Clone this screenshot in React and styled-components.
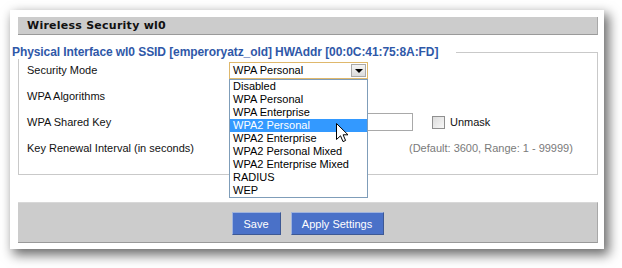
import React from "react";
import styled, { createGlobalStyle } from "styled-components";

const GlobalStyle = createGlobalStyle`
  html, body { margin: 0; padding: 0; background: #ffffff; }
  body { font-family: "Liberation Sans", Arial, sans-serif; font-size: 11px; color: #000; }
`;

const Page = styled.div`
  padding: 10px 18px 19px 10px;
  width: 594px;
`;

const Card = styled.div`
  width: 594px;
  box-sizing: border-box;
  background: #fff;
  padding: 7px 6px 6px 8px;
  box-shadow: 4px 5px 11px 1px rgba(0, 0, 0, 0.58);
`;

const HeaderBar = styled.div`
  height: 17px;
  background: #cccccc;
  border-bottom: 1px solid #9a9a9a;
  border-right: 1px solid #a8a8a8;
  display: flex;
  align-items: center;
  padding-left: 9px;
`;

const Title = styled.h2`
  margin: 0;
  font-family: "DejaVu Sans", Verdana, sans-serif;
  font-weight: bold;
  font-size: 11px;
  color: #111;
  letter-spacing: 0.25px;
`;

const Fieldset = styled.fieldset`
  margin: 10px 0 0 0;
  padding: 0 0 15px 8px;
  border: 1px solid #c9c9c9;
  min-inline-size: 0;
`;

const Legend = styled.legend`
  margin-left: -15px;
  padding: 0 18px 0 0;
  line-height: 14px;
  font-weight: bold;
  font-size: 12px;
  letter-spacing: -0.08px;
  color: #2f58a8;
`;

const Grid = styled.div`
  display: grid;
  grid-template-columns: 202px 1fr;
  grid-auto-rows: 22px;
  row-gap: 4px;
  align-items: center;
`;

const Label = styled.div`
  color: #111;
`;

const Cell = styled.div`
  display: flex;
  align-items: center;
  position: relative;
  padding-left: ${(p) => p.$indent || 0}px;
`;

const SelectWrap = styled.div`
  position: relative;
  width: 139px;
`;

const SelectBox = styled.div`
  box-sizing: border-box;
  height: 17px;
  width: 139px;
  border: 1px solid #dfb86c;
  display: flex;
  align-items: center;
  justify-content: space-between;
  padding-left: 3px;
  background: #fff;
`;

const ArrowButton = styled.span`
  box-sizing: border-box;
  width: 15px;
  height: 13px;
  margin-right: 1px;
  border: 1px solid #a9a9a9;
  background: linear-gradient(#f4f4f4, #dcdcdc);
  display: flex;
  align-items: center;
  justify-content: center;
  &::after {
    content: "";
    border-left: 4px solid transparent;
    border-right: 4px solid transparent;
    border-top: 4px solid #000;
    margin-top: 1px;
  }
`;

const DropList = styled.ul`
  position: absolute;
  top: 100%;
  left: 0;
  box-sizing: border-box;
  width: 139px;
  margin: 0;
  padding: 0;
  list-style: none;
  background: #fff;
  border: 1px solid #7f9db9;
  z-index: 5;
`;

const Option = styled.li`
  height: 13px;
  line-height: 13px;
  padding-left: 3px;
  white-space: nowrap;
  background: ${(p) => (p.$active ? "#3399ff" : "transparent")};
  color: ${(p) => (p.$active ? "#fff" : "#000")};
`;

const Cursor = styled.svg`
  position: absolute;
  left: 106px;
  top: 43px;
  z-index: 6;
`;

const TextInput = styled.div`
  box-sizing: border-box;
  width: 184px;
  height: 18px;
  border: 1px solid #a9a9a9;
  background: #fff;
`;

const CheckBox = styled.span`
  box-sizing: border-box;
  width: 13px;
  height: 13px;
  margin-left: 19px;
  border: 1px solid #8f8f8f;
  background: linear-gradient(135deg, #dcdcdc, #f8f8f8);
`;

const CheckLabel = styled.span`
  margin-left: 5px;
  color: #111;
`;

const Hint = styled.span`
  color: #7a7a7a;
`;

const Footer = styled.div`
  margin-top: 27px;
  background: #cccccc;
  border-top: 1px solid #d8d8d8;
  border-bottom: 1px solid #999;
  border-right: 1px solid #a8a8a8;
  box-sizing: border-box;
  height: 41px;
  display: flex;
  justify-content: center;
  align-items: flex-start;
  gap: 10px;
  padding-top: 9px;
`;

const Button = styled.button`
  box-sizing: border-box;
  height: 23px;
  width: ${(p) => p.$w}px;
  padding: 0;
  font-family: "Liberation Sans", Arial, sans-serif;
  font-size: 11px;
  color: #fff;
  background: #4a71c8;
  border: 1px solid;
  border-color: #9fb3dd #3d5894 #3d5894 #9fb3dd;
`;

const options = [
  "Disabled",
  "WPA Personal",
  "WPA Enterprise",
  "WPA2 Personal",
  "WPA2 Enterprise",
  "WPA2 Personal Mixed",
  "WPA2 Enterprise Mixed",
  "RADIUS",
  "WEP",
];

export default function App() {
  return (
    <>
      <GlobalStyle />
      <Page>
        <Card>
          <HeaderBar>
            <Title>Wireless Security wl0</Title>
          </HeaderBar>
          <Fieldset>
            <Legend>
              Physical Interface wl0 SSID [emperoryatz_old] HWAddr [00:0C:41:75:8A:FD]
            </Legend>
            <Grid>
              <Label>Security Mode</Label>
              <Cell>
                <SelectWrap>
                  <SelectBox>
                    <span>WPA Personal</span>
                    <ArrowButton />
                  </SelectBox>
                  <DropList>
                    {options.map((o) => (
                      <Option key={o} $active={o === "WPA2 Personal"}>
                        {o}
                      </Option>
                    ))}
                    <Cursor width="13" height="20" viewBox="0 0 13 20">
                      <path
                        d="M0.5 0.5 L0.5 16.5 L4.5 12.8 L7 18.6 L9.6 17.5 L7.1 11.8 L12 11.8 Z"
                        fill="#fff"
                        stroke="#000"
                        strokeWidth="1"
                        strokeLinejoin="miter"
                      />
                    </Cursor>
                  </DropList>
                </SelectWrap>
              </Cell>
              <Label>WPA Algorithms</Label>
              <Cell />
              <Label>WPA Shared Key</Label>
              <Cell>
                <TextInput />
                <CheckBox />
                <CheckLabel>Unmask</CheckLabel>
              </Cell>
              <Label>Key Renewal Interval (in seconds)</Label>
              <Cell $indent={180}>
                <Hint>(Default: 3600, Range: 1 - 99999)</Hint>
              </Cell>
            </Grid>
          </Fieldset>
          <Footer>
            <Button $w={49}>Save</Button>
            <Button $w={93}>Apply Settings</Button>
          </Footer>
        </Card>
      </Page>
    </>
  );
}
